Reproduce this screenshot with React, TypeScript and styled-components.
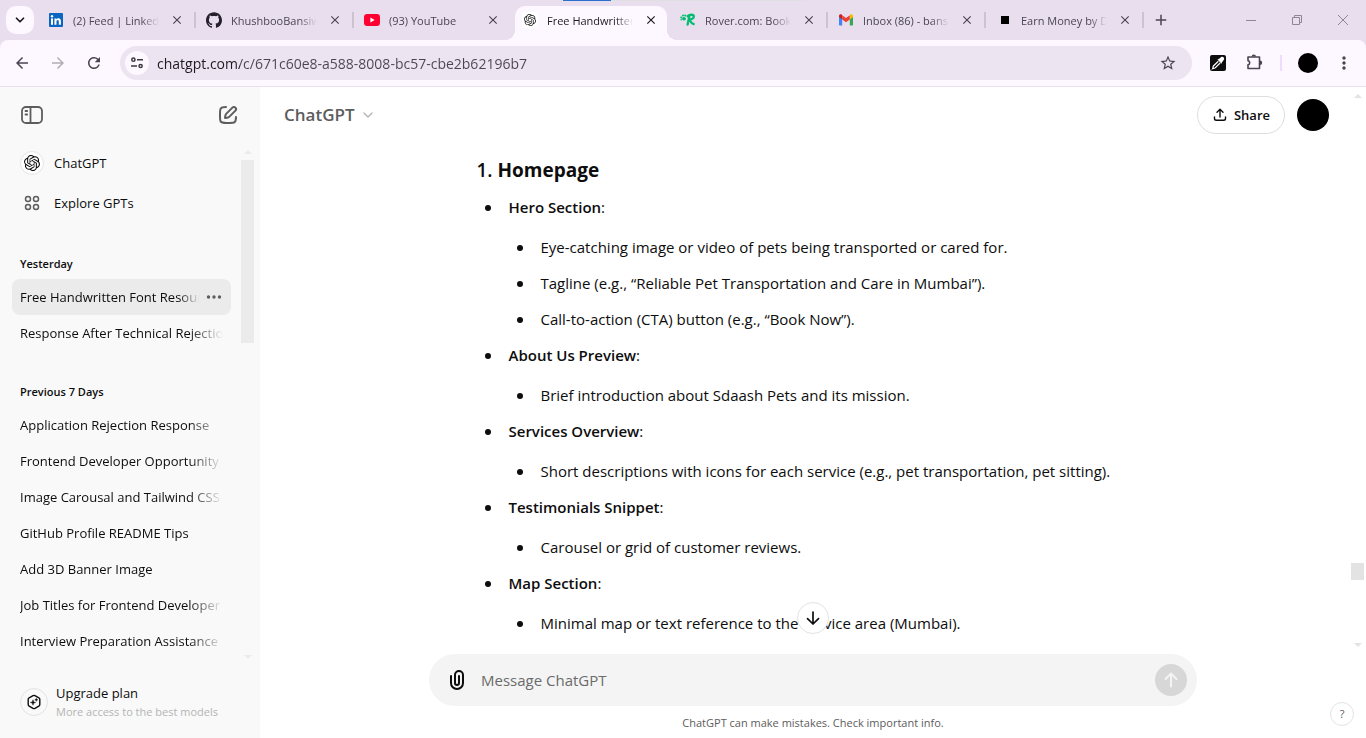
import React from "react";
import styled, { createGlobalStyle, css } from "styled-components";
import {
  MdAdd,
  MdArrowBack,
  MdArrowForward,
  MdClose,
  MdMoreVert,
  MdRefresh,
  MdStarBorder,
} from "react-icons/md";
import { SiGithub, SiOpenai } from "react-icons/si";
import { ChevronDown } from "lucide-react";

const GlobalStyle = createGlobalStyle`
  *, *::before, *::after { box-sizing: border-box; }
  body {
    margin: 0;
    font-family: "Segoe UI", "Open Sans", "Noto Sans", sans-serif;
    color: #0d0d0d;
    background: #fff;
  }
  button, input { font: inherit; color: inherit; }
  button { border: 0; padding: 0; background: none; cursor: pointer; }
  a { color: inherit; text-decoration: none; }
  ul { list-style: none; margin: 0; padding: 0; }
  h1, h2, h3, p { margin: 0; font: inherit; }
  svg { display: block; flex: none; }
`;

const Window = styled.div`
  display: flex;
  flex-direction: column;
  height: 100vh;
  overflow: hidden;
`;

/* ---------- Browser tab strip ---------- */

const TabStrip = styled.div`
  position: relative;
  display: flex;
  align-items: center;
  height: 40px;
  flex: none;
  background: #e8deee;
`;

const ShareIndicator = styled.div`
  position: absolute;
  top: 0;
  left: 563px;
  width: 242px;
  height: 1px;
  background: linear-gradient(90deg, #2b6fce 48px, #dfe0e2 48px);
`;

const TabSearch = styled.button`
  display: grid;
  place-items: center;
  width: 28px;
  height: 28px;
  margin: 0 4px 0 6px;
  flex: none;
  border-radius: 10px;
  background: #fdf7ff;
  color: #1d1b20;
`;

const TabList = styled.div`
  display: flex;
  align-self: stretch;
  min-width: 0;
`;

const TabItem = styled.div<{ $active?: boolean; $divider?: boolean }>`
  position: relative;
  display: flex;
  align-items: center;
  width: 158px;
  min-width: 0;
  padding: 0 11px 0 10px;
  color: ${(p) => (p.$active ? "#1d1b20" : "#4a4453")};
  ${(p) =>
    p.$divider &&
    css`
      &::after {
        content: "";
        position: absolute;
        right: 0;
        top: 12px;
        width: 2px;
        height: 16px;
        background: #cbc3d0;
      }
    `}
  ${(p) =>
    p.$active &&
    css`
      width: 152px;
      margin: 6px 3px 0;
      padding: 0 8px 6px 7px;
      border-radius: 10px 10px 0 0;
      background: #fdf7ff;
      &::before,
      &::after {
        content: "";
        position: absolute;
        bottom: 0;
        width: 10px;
        height: 10px;
      }
      &::before {
        right: 100%;
        background: radial-gradient(circle at 0 0, transparent 10px, #fdf7ff 10px);
      }
      &::after {
        left: 100%;
        background: radial-gradient(circle at 100% 0, transparent 10px, #fdf7ff 10px);
      }
    `}
`;

const TabButton = styled.button`
  display: flex;
  align-items: center;
  gap: 9px;
  flex: 1;
  min-width: 0;
  height: 28px;
  text-align: left;
`;

const Favicon = styled.span`
  display: grid;
  place-items: center;
  width: 16px;
  height: 16px;
  flex: none;
`;

const TabTitle = styled.span`
  flex: 1;
  overflow: hidden;
  white-space: nowrap;
  padding-top: 2px;
  font-size: 11px;
  line-height: 16px;
  mask-image: linear-gradient(90deg, #000 calc(100% - 18px), transparent);
`;

const TabClose = styled.button`
  display: grid;
  place-items: center;
  width: 16px;
  height: 16px;
  margin-left: 10px;
  flex: none;
`;

const NewTab = styled.button`
  display: grid;
  place-items: center;
  width: 34px;
  height: 28px;
  color: #4a4453;
`;

const WindowControls = styled.div`
  display: flex;
  margin-left: auto;
  color: #8d8693;
`;

const WindowButton = styled.button`
  display: grid;
  place-items: center;
  width: 46px;
  height: 40px;
`;

/* ---------- Browser toolbar ---------- */

const ToolbarBack = styled.div`
  flex: none;
  background: #e8deee;
`;

const Toolbar = styled.div`
  display: flex;
  align-items: center;
  height: 47px;
  padding: 0 4px;
  border-radius: 8px 8px 0 0;
  border-bottom: 1px solid #e8deee;
  background: #fdf7ff;
  color: #4a4453;
`;

const ToolButton = styled.button<{ $dim?: boolean }>`
  display: grid;
  place-items: center;
  width: 36px;
  height: 34px;
  flex: none;
  color: ${(p) => (p.$dim ? "#b3adb8" : "inherit")};
`;

const AddressBar = styled.div`
  display: flex;
  align-items: center;
  flex: 1;
  height: 34px;
  min-width: 0;
  margin: 0 8px;
  padding: 0 6px 0 5px;
  border-radius: 17px;
  background: #ece5f1;
`;

const SiteInfo = styled.button`
  display: grid;
  place-items: center;
  width: 24px;
  height: 24px;
  flex: none;
  border-radius: 50%;
  background: #fdf7ff;
`;

const AddressInput = styled.input`
  flex: 1;
  min-width: 0;
  height: 24px;
  margin-left: 8px;
  padding: 0;
  border: 0;
  outline: 0;
  font-size: 14px;
  color: transparent;
  background: linear-gradient(90deg, #1d1b20 83px, #4a4553 83px);
  background-clip: text;
`;

const ToolDivider = styled.span`
  width: 2px;
  height: 16px;
  margin: 0 8px;
  background: #ecdcff;
`;

const Avatar = styled.span<{ $size: number }>`
  display: block;
  width: ${(p) => p.$size}px;
  height: ${(p) => p.$size}px;
  border-radius: 50%;
  background: #000;
`;

/* ---------- Page ---------- */

const Page = styled.div`
  display: flex;
  flex: 1;
  min-height: 0;
`;

const Sidebar = styled.nav`
  display: flex;
  flex-direction: column;
  width: 260px;
  flex: none;
  background: #f9f9f9;
`;

const SidebarHeader = styled.div`
  display: flex;
  justify-content: space-between;
  align-items: center;
  height: 56px;
  padding: 0 20px;
  flex: none;
  color: #5d5d5d;
`;

const IconButton = styled.button`
  display: grid;
  place-items: center;
`;

const SidebarScroll = styled.div`
  display: flex;
  flex: 1;
  min-height: 0;
  padding-right: 6px;
`;

const SidebarLists = styled.div`
  flex: 1;
  min-width: 0;
  overflow: hidden;
  padding-left: 12px;
`;

const GptLink = styled.a`
  display: flex;
  align-items: center;
  gap: 10px;
  height: 40px;
  padding-left: 8px;
  font-size: 13px;
  line-height: 20px;
`;

const GptIcon = styled.span<{ $ring?: boolean }>`
  display: grid;
  place-items: center;
  width: 24px;
  height: 24px;
  border-radius: 50%;
  color: #5d5d5d;
  ${(p) =>
    p.$ring &&
    css`
      color: #0d0d0d;
      background: #fff;
      border: 1px solid #e5e5e5;
    `}
`;

const HistoryGroup = styled.section`
  padding-top: 20px;
  margin-top: 8px;
`;

const HistoryHeading = styled.h3`
  height: 28px;
  padding: 3px 8px 0;
  font-size: 11px;
  line-height: 20px;
  font-weight: 600;
`;

const HistoryRow = styled.li<{ $selected?: boolean }>`
  display: flex;
  align-items: center;
  height: 36px;
  margin-right: 10px;
  padding: 0 8px;
  border-radius: 8px;
  font-size: 13px;
  line-height: 20px;
  background: ${(p) => (p.$selected ? "#ebebeb" : "transparent")};
`;

const HistoryLink = styled.a<{ $fade?: boolean }>`
  flex: 1;
  overflow: hidden;
  white-space: nowrap;
  mask-image: ${(p) =>
    p.$fade
      ? "linear-gradient(90deg, #000 calc(100% - 34px), transparent)"
      : "linear-gradient(90deg, #000 calc(100% - 20px), transparent)"};
`;

const RowMenu = styled.button`
  display: grid;
  place-items: center;
  width: 18px;
  height: 20px;
  margin-left: 6px;
  color: #5d5d5d;
`;

const ScrollTrack = styled.div<{ $tone: string }>`
  display: flex;
  flex-direction: column;
  align-items: center;
  width: 13px;
  flex: none;
  color: ${(p) => p.$tone};
  padding: 7px 0;
`;

const ScrollThumb = styled.div<{ $offset: number; $size: number }>`
  width: 13px;
  height: ${(p) => p.$size}%;
  margin-top: ${(p) => p.$offset}px;
  margin-bottom: auto;
  background: currentColor;
`;

const UpgradeLink = styled.a`
  display: flex;
  align-items: center;
  gap: 8px;
  height: 72px;
  padding: 0 20px;
  flex: none;
`;

const UpgradeIcon = styled.span`
  display: grid;
  place-items: center;
  width: 28px;
  height: 28px;
  border: 1px solid #e3e3e3;
  border-radius: 50%;
`;

const UpgradeTitle = styled.span`
  display: block;
  font-size: 13px;
  line-height: 20px;
`;

const UpgradeHint = styled.span`
  display: block;
  font-size: 11px;
  line-height: 18px;
  color: #b4b4b4;
`;

const Main = styled.main`
  position: relative;
  display: flex;
  flex-direction: column;
  flex: 1;
  min-width: 0;
`;

const Thread = styled.div`
  display: flex;
  flex: 1;
  min-height: 0;
  padding-right: 2px;
`;

const ThreadBody = styled.div`
  display: flex;
  flex-direction: column;
  flex: 1;
  min-width: 0;
`;

const ThreadHeader = styled.header`
  display: flex;
  align-items: center;
  height: 56px;
  padding: 0 22px 0 24px;
  flex: none;
`;

const ModelButton = styled.button`
  display: flex;
  align-items: center;
  gap: 5px;
  font-size: 17px;
  line-height: 28px;
  font-weight: 600;
  color: #5d5d5d;
`;

const HeaderActions = styled.div`
  display: flex;
  align-items: center;
  gap: 12px;
  margin-left: auto;
`;

const ShareButton = styled.button`
  display: flex;
  align-items: center;
  justify-content: center;
  gap: 6px;
  width: 88px;
  height: 38px;
  border: 1px solid #dedede;
  border-radius: 19px;
  font-size: 13px;
  font-weight: 600;
`;

const Answer = styled.article`
  flex: 1;
  min-height: 0;
  width: 100%;
  max-width: 768px;
  margin: 0 auto;
  padding: 11px 0 0 55px;
  overflow: hidden;
  font-size: 15px;
  line-height: 28px;
`;

const AnswerTitle = styled.h2`
  margin-bottom: 7px;
  font-size: 19px;
  line-height: 32px;
  font-weight: 600;
  b {
    font-weight: 700;
  }
`;

const BulletList = styled.ul`
  display: flex;
  flex-direction: column;
  gap: 8px;
`;

const Bullet = styled.li`
  position: relative;
  padding-left: 32px;
  &::before {
    content: "";
    position: absolute;
    left: 8px;
    top: 12px;
    width: 6px;
    height: 6px;
    border-radius: 50%;
    background: #0d0d0d;
  }
  strong {
    font-weight: 600;
  }
  & > ul {
    margin-top: 12px;
  }
`;

const ScrollDown = styled.button`
  position: absolute;
  left: 50%;
  bottom: 104px;
  display: grid;
  place-items: center;
  width: 32px;
  height: 32px;
  margin-left: -16px;
  border: 1px solid #e3e3e3;
  border-radius: 50%;
  background: #fff;
`;

const Footer = styled.footer`
  flex: none;
  padding: 0 16px;
`;

const Composer = styled.form`
  display: flex;
  align-items: center;
  max-width: 768px;
  height: 52px;
  margin: 0 auto;
  padding: 0 10px 0 16px;
  border-radius: 26px;
  background: #f4f4f4;
`;

const ComposerInput = styled.input`
  flex: 1;
  min-width: 0;
  margin: 0 12px;
  padding: 0;
  border: 0;
  outline: 0;
  background: transparent;
  font-size: 15px;
  line-height: 24px;
  &::placeholder {
    color: #6b6b6b;
    opacity: 1;
  }
`;

const SendButton = styled.button`
  display: grid;
  place-items: center;
  width: 32px;
  height: 32px;
  border-radius: 50%;
  color: #f4f4f4;
  background: #d7d7d7;
`;

const Disclaimer = styled.p`
  height: 32px;
  padding-top: 9px;
  text-align: center;
  font-size: 11px;
  line-height: 16px;
  color: #5d5d5d;
`;

const HelpButton = styled.button`
  position: absolute;
  right: 12px;
  bottom: 12px;
  width: 24px;
  height: 24px;
  border: 1px solid #e3e3e3;
  border-radius: 50%;
  font-size: 11px;
  line-height: 20px;
  color: #5d5d5d;
`;

/* ---------- Drawings ---------- */

const LinkedInIcon = () => (
  <svg width="16" height="16" viewBox="0 0 16 16">
    <rect x="1" y="1" width="14" height="14" rx="1" fill="#0a66c2" />
    <rect x="3" y="6.4" width="2" height="6.4" fill="#fff" />
    <circle cx="4" cy="4.2" r="1.2" fill="#fff" />
    <path d="M6.4 6.4h2v.9c.4-.7 1.1-1.1 2-1.1 2 0 2.5 1.3 2.5 3.1v3.5h-2.1V9.7c0-.8-.1-1.6-1.1-1.6s-1.2.8-1.2 1.6v3.1H6.4z" fill="#fff" />
  </svg>
);

const YouTubeIcon = () => (
  <svg width="16" height="16" viewBox="0 0 16 16">
    <rect x="0" y="2" width="16" height="12" rx="3.2" fill="#ff0033" />
    <path d="M6.4 5.5 10.6 8l-4.2 2.5z" fill="#fff" />
  </svg>
);

const RoverIcon = () => (
  <svg width="16" height="16" viewBox="0 0 16 16" fill="#00bd70">
    <circle cx="1.2" cy="5.4" r="1" />
    <circle cx="3" cy="3.6" r="1" />
    <circle cx="5.2" cy="3.6" r="1" />
    <circle cx="1.2" cy="7.8" r=".8" />
    <ellipse cx="4" cy="6.7" rx="2" ry="1.8" />
    <path d="M9.4 4 7.6 12.6M7.6 4.2c2.2-2 6.600-2 6.200.4-.3 2-2.600 2.900-4.800 3 2 .8 1.900 4.600 4.600 4.400" fill="none" stroke="#00bd70" strokeWidth="2.300" strokeLinecap="round" strokeLinejoin="round" />
  </svg>
);

const GmailIcon = () => (
  <svg width="16" height="16" viewBox="0 0 16 16">
    <path d="M1 4.5v8c0 .6.4 1 1 1h2.2V6.8z" fill="#4285f4" />
    <path d="M11.8 13.5H14c.6 0 1-.4 1-1v-8l-3.2 2.3z" fill="#34a853" />
    <path d="M11.8 3.8v3.6L15 5V3.9c0-1.4-1.5-2.1-2.6-1.3z" fill="#fbbc04" />
    <path d="M4.2 7.4V3.2L8 6.1l3.8-2.9v4.2L8 10.3z" fill="#ea4335" />
    <path d="M1 3.9V5l3.2 2.4V3.2l-.6-.6C2.5 1.8 1 2.5 1 3.9z" fill="#c5221f" />
  </svg>
);

const SquareIcon = () => (
  <svg width="16" height="16" viewBox="0 0 16 16">
    <rect x="5" y="4" width="8" height="8" fill="#000" />
  </svg>
);

const ActiveTabIcon = () => (
  <svg width="16" height="16" viewBox="0 0 16 16">
    <rect width="16" height="16" rx="3" fill="#fff" />
    <svg x="2" y="2" width="12" height="12" viewBox="0 0 24 24">
      <SiOpenai size={24} color="#1d1b20" />
    </svg>
  </svg>
);

const TuneIcon = () => (
  <svg width="14" height="14" viewBox="0 0 14 14" fill="none" stroke="#3b3642" strokeWidth="1.5">
    <circle cx="3.4" cy="3.7" r="1.6" />
    <path d="M7 3.7h6M1 10h6" />
    <circle cx="10.6" cy="10" r="1.6" />
  </svg>
);

const DropperIcon = () => (
  <svg width="16" height="16" viewBox="0 0 16 16">
    <rect width="16" height="16" rx="2" fill="#0d0d0d" />
    <path d="M8.3 6.2 3.4 11c-.5.6-.3 2-.6 2.500.6-.3 1.900-.1 2.400-.6l4.900-4.900" fill="none" stroke="#fff" strokeWidth="1.2" />
    <path d="M7.4 4.4 8.8 3.9l2.4-2c1.6-1 3.9 1 2.7 2.8l-1.900 2.600-.5 1.500z" fill="#fff" />
  </svg>
);

const PuzzleIcon = () => (
  <svg width="18" height="18" viewBox="0 0 18 18">
    <path
      d="M3 3h11.500v11.500H3v-3.600a2.200 2.200 0 0 0 0-4.300z"
      fill="none"
      stroke="currentColor"
      strokeWidth="1.600"
      strokeLinejoin="round"
    />
    <path d="M6.600 2.600a2.200 2.200 0 0 1 4.400 0zM15 6.600a2.200 2.200 0 0 1 0 4.400z" fill="currentColor" />
  </svg>
);

const PanelIcon = () => (
  <svg width="24" height="24" viewBox="0 0 24 24" fill="none" stroke="currentColor" strokeWidth="1.8" strokeLinecap="round">
    <rect x="2" y="4" width="20" height="16" rx="4" />
    <path d="M10.5 4v16M5.5 8h1.7M5.5 11.5h1.7" />
  </svg>
);

const ComposeIcon = () => (
  <svg width="24" height="24" viewBox="0 0 24 24" fill="none" stroke="currentColor" strokeWidth="2" strokeLinecap="round" strokeLinejoin="round">
    <path d="M10 4c-3.4 0-4.6.3-5.4 1.700C4.100 6.600 4 7.800 4 10.400v3.200c0 3 .1 4.100.6 4.800.9 1.400 2.200 1.600 5.800 1.600h3.200c3 0 4.100-.1 4.800-.6 1.400-.9 1.600-2.100 1.600-5.400" />
    <path d="m16.4 4.600-6 6c-.6.600-1 1.400-1.100 2.200L9 15l2.200-.3c.8-.1 1.600-.5 2.200-1.100l6-6a2.120 2.120 0 0 0-3-3z" />
  </svg>
);

const GridIcon = () => (
  <svg width="16" height="16" viewBox="0 0 16 16" fill="none" stroke="currentColor" strokeWidth="1.5">
    <circle cx="4" cy="4" r="2.5" />
    <circle cx="12" cy="4" r="2.5" />
    <circle cx="4" cy="12" r="2.5" />
    <circle cx="12" cy="12" r="2.5" />
  </svg>
);

const DotsIcon = () => (
  <svg width="16" height="4" viewBox="0 0 16 4" fill="currentColor">
    <circle cx="2.5" cy="2" r="1.7" />
    <circle cx="8" cy="2" r="1.7" />
    <circle cx="13.5" cy="2" r="1.7" />
  </svg>
);

const UpgradeBadge = () => (
  <svg width="16" height="16" viewBox="0 0 16 16">
    <path d="M7.1 1.6a2 2 0 0 1 1.800 0l4 2.300c.6.300.9.900.9 1.500v5.200c0 .6-.3 1.200-.9 1.500l-4 2.300a2 2 0 0 1-1.800 0l-4-2.300c-.6-.3-.9-.9-.9-1.500V5.400c0-.6.3-1.200.9-1.500z" fill="none" stroke="#0d0d0d" strokeWidth="1.4" />
    <path d="M7 5.800c.3 1.800.9 2.400 2.600 2.700C7.900 8.800 7.300 9.400 7 11.200 6.700 9.400 6.100 8.800 4.400 8.500 6.100 8.200 6.700 7.600 7 5.800zM10.300 4.300c.2.900.5 1.300 1.500 1.500-1 .2-1.300.6-1.500 1.500-.2-.9-.5-1.300-1.500-1.500 1-.2 1.300-.6 1.500-1.500z" fill="#0d0d0d" stroke="#0d0d0d" strokeWidth=".5" />
  </svg>
);

const ShareIcon = () => (
  <svg width="16" height="16" viewBox="0 0 16 16" fill="none" stroke="currentColor" strokeWidth="1.4" strokeLinecap="round" strokeLinejoin="round">
    <path d="M8 10V2.500M5 5.200l3-3 3 3M2.500 10v1.500c0 1.200.6 1.800 1.800 1.800h7.400c1.200 0 1.800-.6 1.800-1.800V10" />
  </svg>
);

const ClipIcon = () => (
  <svg width="24" height="24" viewBox="0 0 24 24" fill="none" stroke="#0d0d0d" strokeWidth="2" strokeLinecap="round">
    <path d="M6 8v7a6 6 0 0 0 12 0V7a4 4 0 0 0-8 0v8a2 2 0 0 0 4 0V8" />
  </svg>
);

const DownIcon = () => (
  <svg width="24" height="24" viewBox="0 0 24 24" fill="none" stroke="#0d0d0d" strokeWidth="1.7" strokeLinecap="round" strokeLinejoin="round">
    <path d="M12 6v12M6.500 12.700 12 18l5.500-5.300" />
  </svg>
);

const SendIcon = () => (
  <svg width="24" height="24" viewBox="0 0 24 24" fill="none" stroke="currentColor" strokeWidth="2" strokeLinecap="round" strokeLinejoin="round">
    <path d="M12 18.500V6M6.500 11 12 5.500l5.500 5.500" />
  </svg>
);

const Arrow = ({ down }: { down?: boolean }) => (
  <svg width="8" height="4" viewBox="0 0 8 4" fill="currentColor">
    <path d={down ? "M0 0h8L4 4z" : "M0 4h8L4 0z"} />
  </svg>
);

/* ---------- Data ---------- */

const tabs = [
  { title: "(2) Feed | LinkedIn", icon: <LinkedInIcon />, divider: true },
  { title: "KhushbooBansiwal", icon: <SiGithub size={16} color="#24212b" />, divider: true },
  { title: "(93) YouTube", icon: <YouTubeIcon /> },
  { title: "Free Handwritten", icon: <ActiveTabIcon />, active: true },
  { title: "Rover.com: Book", icon: <RoverIcon />, divider: true },
  { title: "Inbox (86) - bansi", icon: <GmailIcon />, divider: true },
  { title: "Earn Money by D", icon: <SquareIcon />, divider: true },
];

const history = [
  {
    label: "Yesterday",
    chats: [
      { title: "Free Handwritten Font Resources", selected: true },
      { title: "Response After Technical Rejection" },
    ],
  },
  {
    label: "Previous 7 Days",
    chats: [
      { title: "Application Rejection Response" },
      { title: "Frontend Developer Opportunity" },
      { title: "Image Carousal and Tailwind CSS" },
      { title: "GitHub Profile README Tips" },
      { title: "Add 3D Banner Image" },
      { title: "Job Titles for Frontend Developer" },
      { title: "Interview Preparation Assistance" },
    ],
  },
];

const sections = [
  {
    name: "Hero Section",
    items: [
      "Eye-catching image or video of pets being transported or cared for.",
      "Tagline (e.g., “Reliable Pet Transportation and Care in Mumbai”).",
      "Call-to-action (CTA) button (e.g., “Book Now”).",
    ],
  },
  { name: "About Us Preview", items: ["Brief introduction about Sdaash Pets and its mission."] },
  {
    name: "Services Overview",
    items: ["Short descriptions with icons for each service (e.g., pet transportation, pet sitting)."],
  },
  { name: "Testimonials Snippet", items: ["Carousel or grid of customer reviews."] },
  { name: "Map Section", items: ["Minimal map or text reference to the service area (Mumbai)."] },
];

/* ---------- App ---------- */

const BrowserChrome = () => (
  <>
    <TabStrip>
      <TabSearch aria-label="Search tabs">
        <ChevronDown size={14} strokeWidth={3} />
      </TabSearch>
      <TabList role="tablist">
        {tabs.map((tab) => (
          <TabItem key={tab.title} $active={tab.active} $divider={tab.divider}>
            <TabButton role="tab" aria-selected={!!tab.active}>
              <Favicon>{tab.icon}</Favicon>
              <TabTitle>{tab.title}</TabTitle>
            </TabButton>
            <TabClose aria-label={`Close ${tab.title}`}>
              <MdClose size={14} />
            </TabClose>
          </TabItem>
        ))}
      </TabList>
      <NewTab aria-label="New tab">
        <MdAdd size={18} />
      </NewTab>
      <WindowControls>
        <WindowButton aria-label="Minimize">
          <svg width="10" height="10" viewBox="0 0 10 10" stroke="currentColor">
            <path d="M0 5.500h10" />
          </svg>
        </WindowButton>
        <WindowButton aria-label="Restore">
          <svg width="10" height="10" viewBox="0 0 10 10" fill="none" stroke="currentColor">
            <path d="M.5 2.500h7v7h-7zM2.500 2.500v-2h7v7h-2" />
          </svg>
        </WindowButton>
        <WindowButton aria-label="Close window">
          <svg width="10" height="10" viewBox="0 0 10 10" stroke="currentColor">
            <path d="M0 0l10 10M10 0 0 10" />
          </svg>
        </WindowButton>
      </WindowControls>
      <ShareIndicator />
    </TabStrip>
    <ToolbarBack>
      <Toolbar>
        <ToolButton aria-label="Back">
          <MdArrowBack size={18} />
        </ToolButton>
        <ToolButton aria-label="Forward" $dim>
          <MdArrowForward size={18} />
        </ToolButton>
        <ToolButton aria-label="Reload">
          <MdRefresh size={18} />
        </ToolButton>
        <AddressBar>
          <SiteInfo aria-label="View site information">
            <TuneIcon />
          </SiteInfo>
          <AddressInput
            aria-label="Address"
            defaultValue="chatgpt.com/c/671c60e8-a588-8008-bc57-cbe2b62196b7"
          />
          <ToolButton aria-label="Bookmark this tab">
            <MdStarBorder size={18} />
          </ToolButton>
        </AddressBar>
        <ToolButton aria-label="Color picker">
          <DropperIcon />
        </ToolButton>
        <ToolButton aria-label="Extensions">
          <PuzzleIcon />
        </ToolButton>
        <ToolDivider />
        <ToolButton aria-label="Profile">
          <Avatar $size={20} />
        </ToolButton>
        <ToolButton aria-label="Menu">
          <MdMoreVert size={20} />
        </ToolButton>
      </Toolbar>
    </ToolbarBack>
  </>
);

const SidebarPanel = () => (
  <Sidebar>
    <SidebarHeader>
      <IconButton aria-label="Close sidebar">
        <PanelIcon />
      </IconButton>
      <IconButton aria-label="New chat">
        <ComposeIcon />
      </IconButton>
    </SidebarHeader>
    <SidebarScroll>
      <SidebarLists>
        <GptLink href="#chatgpt">
          <GptIcon $ring>
            <SiOpenai size={16} />
          </GptIcon>
          ChatGPT
        </GptLink>
        <GptLink href="#gpts">
          <GptIcon>
            <GridIcon />
          </GptIcon>
          Explore GPTs
        </GptLink>
        {history.map((group) => (
          <HistoryGroup key={group.label}>
            <HistoryHeading>{group.label}</HistoryHeading>
            <ul>
              {group.chats.map((chat) => (
                <HistoryRow key={chat.title} $selected={chat.selected}>
                  <HistoryLink href="#chat" $fade={!chat.selected}>
                    {chat.title}
                  </HistoryLink>
                  {chat.selected && (
                    <RowMenu aria-label="Chat options">
                      <DotsIcon />
                    </RowMenu>
                  )}
                </HistoryRow>
              ))}
            </ul>
          </HistoryGroup>
        ))}
      </SidebarLists>
      <ScrollTrack $tone="#ebebeb">
        <Arrow />
        <ScrollThumb $offset={6} $size={36} />
        <Arrow down />
      </ScrollTrack>
    </SidebarScroll>
    <UpgradeLink href="#upgrade">
      <UpgradeIcon>
        <UpgradeBadge />
      </UpgradeIcon>
      <span>
        <UpgradeTitle>Upgrade plan</UpgradeTitle>
        <UpgradeHint>More access to the best models</UpgradeHint>
      </span>
    </UpgradeLink>
  </Sidebar>
);

const Conversation = () => (
  <Main>
    <Thread>
      <ThreadBody>
        <ThreadHeader>
          <ModelButton>
            ChatGPT
            <ChevronDown size={16} color="#b4b4b4" />
          </ModelButton>
          <HeaderActions>
            <ShareButton>
              <ShareIcon />
              Share
            </ShareButton>
            <IconButton aria-label="Account">
              <Avatar $size={32} />
            </IconButton>
          </HeaderActions>
        </ThreadHeader>
        <Answer>
          <AnswerTitle>
            1. <b>Homepage</b>
          </AnswerTitle>
          <BulletList>
            {sections.map((section) => (
              <Bullet key={section.name}>
                <strong>{section.name}</strong>:
                <BulletList>
                  {section.items.map((item) => (
                    <Bullet key={item}>{item}</Bullet>
                  ))}
                </BulletList>
              </Bullet>
            ))}
          </BulletList>
        </Answer>
      </ThreadBody>
      <ScrollTrack $tone="#e3e3e3">
        <Arrow />
        <ScrollThumb $offset={465} $size={3} />
        <Arrow down />
      </ScrollTrack>
    </Thread>
    <ScrollDown aria-label="Scroll to bottom">
      <DownIcon />
    </ScrollDown>
    <Footer>
      <Composer>
        <IconButton type="button" aria-label="Attach files">
          <ClipIcon />
        </IconButton>
        <ComposerInput aria-label="Message ChatGPT" placeholder="Message ChatGPT" />
        <SendButton type="button" aria-label="Send message">
          <SendIcon />
        </SendButton>
      </Composer>
      <Disclaimer>ChatGPT can make mistakes. Check important info.</Disclaimer>
    </Footer>
    <HelpButton aria-label="Help">?</HelpButton>
  </Main>
);

export default function App() {
  return (
    <Window>
      <GlobalStyle />
      <BrowserChrome />
      <Page>
        <SidebarPanel />
        <Conversation />
      </Page>
    </Window>
  );
}
